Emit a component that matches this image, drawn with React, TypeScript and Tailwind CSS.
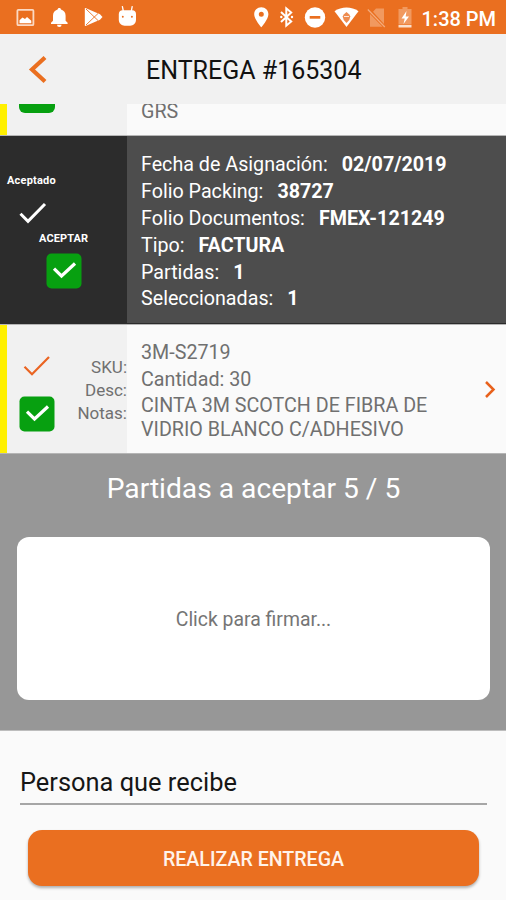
import type { ReactNode } from "react";

function StatusBar() {
  return (
    <div className="flex h-[34px] items-center bg-[#ea6f20] text-white">
      <div className="flex flex-1 pl-4">
        {/* picture */}
        <svg width="26" height="34" viewBox="16 0 26 34">
          <rect x="17.4" y="9.8" width="16" height="15.4" rx="1" fill="none" stroke="#fbd9c3" strokeWidth="1.8" />
          <path d="M19.500 23.200v-3l3-2.700 2.500 1.500 2-2 4.300 3.700v2.500z" fill="#fff" />
        </svg>
        {/* bell */}
        <svg width="36" height="34" viewBox="42 0 36 34">
          <path d="M59.300 8c-1.100 0-1.600.7-1.700 1.600-3 .8-4.600 3.300-4.600 6.100v5L51 22.800V24h16.600v-1.200l-2-2.100v-5c0-2.800-1.600-5.300-4.600-6.100-.1-.9-.6-1.600-1.700-1.600zM57 24.800a2.300 2.300 0 0 0 4.600 0z" fill="#fff" />
        </svg>
        {/* play store */}
        <svg width="34" height="34" viewBox="78 0 34 34">
          <path d="M85.500 8l14.500 6.200 2.500 2.800-2.500 2.800L85.500 26c-.5 0-.7-.3-.7-.8V8.800c0-.5.2-.8.7-.8z" fill="#fff" />
          <path d="M86 9l12 11.500M86 25l12-11.500" stroke="#ea6f20" strokeWidth="0.900" />
        </svg>
        {/* robot */}
        <svg width="28" height="34" viewBox="112 0 28 34">
          <path d="M122.300 6.200l1 4.800M132.300 6.200l-1 4.800" stroke="#fff" strokeWidth="1.300" />
          <path d="M122.500 10.300h9.800c2.200 0 3.700 1.500 3.700 3.700v5.500c0 4-2.800 6.200-5.800 6.200h-5.600c-3 0-5.800-2.200-5.800-6.200V14c0-2.200 1.500-3.700 3.700-3.700z" fill="#fff" />
          <circle cx="122.800" cy="16.700" r="0.950" fill="#ea6f20" />
          <circle cx="131.900" cy="16.700" r="0.950" fill="#ea6f20" />
        </svg>
      </div>
      {/* location */}
      <svg width="24" height="34" viewBox="250 0 24 34">
        <path fillRule="evenodd" d="M261.300 7.300c-4.100 0-7.100 3-7.100 6.900 0 5 7.100 13 7.100 13s7.100-8 7.100-13c0-3.900-3-6.900-7.100-6.900zm0 4.500a2.500 2.500 0 1 1 0 5 2.500 2.500 0 0 1 0-5z" fill="#fff" />
      </svg>
      {/* bluetooth */}
      <svg width="26" height="34" viewBox="274 0 26 34">
        <path d="M281 12l10.200 9.500-4.900 4.200V8.300l4.900 4.200L281 22" fill="none" stroke="#fff" strokeWidth="2" />
        <circle cx="281.300" cy="17" r="1.200" fill="#fff" />
        <circle cx="292" cy="17" r="1.200" fill="#fff" />
      </svg>
      {/* do not disturb */}
      <svg width="30" height="34" viewBox="300 0 30 34">
        <circle cx="315" cy="17.500" r="10.200" fill="#fff" />
        <rect x="309.700" y="16" width="10.600" height="2.700" fill="#ea6f20" />
      </svg>
      {/* wifi */}
      <svg width="34" height="34" viewBox="330 0 34 34">
        <path d="M334.500 11.200c7-4.800 17-4.800 24 0L346.500 27z" fill="#fff" />
        <path d="M346.500 12l2.800 2.500 1 2-1 3.500-2.800 3-2.800-3-1-3.500 1-2z" fill="#ee8c50" />
        <path d="M344 16.500h5" stroke="#fff" strokeWidth="0.800" />
      </svg>
      {/* sim */}
      <svg width="28" height="34" viewBox="364 0 28 34">
        <path d="M376 8.500h8V24l-11-12.300zM370 14v12.700h12.500z" fill="#f1995f" />
        <path d="M367.800 9.500l17 17.500" stroke="#f4ac7c" strokeWidth="1.200" />
      </svg>
      {/* battery */}
      <svg width="29" height="34" viewBox="392 0 29 34">
        <path d="M398.500 9h4V7h5v2h4v15.500h-13z" fill="#f1995f" />
        <path d="M398.500 25h13v2.500h-13z" fill="#fbe0cd" />
        <path d="M406.500 11l-5 7.500h3.200l-1.200 5.500 5.500-7.500h-3.300z" fill="#fff" />
      </svg>
      <span className="mt-[3px] w-[85px] pl-[0.5px] whitespace-nowrap text-[20px] leading-6 font-medium">1:38 PM</span>
    </div>
  );
}

function CheckBox() {
  return (
    <svg width="36" height="36" viewBox="0 0 36 36">
      <rect x="0.500" y="0.500" width="35" height="35" rx="5" fill="#07a010" />
      <path d="M8 15.700l7.500 7.300L29 10.500" fill="none" stroke="#fff" strokeWidth="3.200" />
    </svg>
  );
}

function Tick({ className, weight }: { className: string; weight: number }) {
  return (
    <svg width="28" height="22" viewBox="0 0 28 22" className={className}>
      <path d="M1.500 11.800l7.500 7.500L26 2" fill="none" stroke="currentColor" strokeWidth={weight} />
    </svg>
  );
}

function Detail({ label, children }: { label: string; children: ReactNode }) {
  return (
    <div className="flex gap-[14px] whitespace-nowrap">
      <span>{label}</span>
      <span className="font-bold">{children}</span>
    </div>
  );
}

export default function App() {
  return (
    <div className="flex h-[900px] w-[506px] flex-col overflow-hidden bg-[#fafafa] font-[Roboto,sans-serif]">
      <StatusBar />

      <header className="flex h-[70px] items-center bg-[#f1f1f1]">
        <svg width="146" height="70" viewBox="0 34 146 70">
          <path d="M45 57.500L32 69.500 45 81.500" fill="none" stroke="#ea6f20" strokeWidth="4.200" />
        </svg>
        <h1 className="mt-[4px] whitespace-nowrap text-[25px] leading-8 text-[#111]">ENTREGA #165304</h1>
      </header>

      <div className="flex h-[32px] border-b border-[#b5b5b5]">
        <div className="w-[7px] bg-[#fff000]" />
        <div className="w-[120px] bg-[#f1f1f1] pl-[12px]">
          <div className="h-[9px] w-[36px] rounded-b-[6px] bg-[#07a010]" />
        </div>
        <div className="overflow-hidden pl-[14px]">
          <div className="-mt-[4px] text-[19.7px] leading-6 text-[#707070]">GRS</div>
        </div>
      </div>

      <section className="flex h-[188px] border-b border-[#2b2b2b] bg-[#4d4d4d] text-white">
        <div className="flex w-[127px] flex-col bg-[#2c2c2c] pt-[38px]">
          <span className="pl-[7px] text-[11px] leading-[14px] font-bold tracking-[0.2px]">Aceptado</span>
          <Tick className="mt-[14px] ml-[19px]" weight={3} />
          <span className="mt-[8px] pl-[39px] text-[11px] leading-[14px] font-bold tracking-[0.1px]">ACEPTAR</span>
          <div className="mt-[7px] pl-[46px]"><CheckBox /></div>
        </div>
        <div className="pt-[16.4px] pl-[14px] text-[19.7px] leading-[26.8px]">
          <Detail label="Fecha de Asignación:">02/07/2019</Detail>
          <Detail label="Folio Packing:">38727</Detail>
          <Detail label="Folio Documentos:">FMEX-121249</Detail>
          <Detail label="Tipo:">FACTURA</Detail>
          <Detail label="Partidas:">1</Detail>
          <Detail label="Seleccionadas:">1</Detail>
        </div>
      </section>

      <section className="flex h-[130px] border-y border-[#b5b5b5] text-[#707070]">
        <div className="w-[7px] bg-[#fff000]" />
        <div className="flex w-[120px] justify-between bg-[#f1f1f1] pl-[12px]">
          <div className="pt-[30px]">
            <Tick className="ml-[4px] text-[#ea6422]" weight={2.200} />
            <div className="mt-[19px]"><CheckBox /></div>
          </div>
          <div className="pt-[31px] text-right text-[17px] leading-[23px]">
            <div>SKU:</div>
            <div>Desc:</div>
            <div>Notas:</div>
          </div>
        </div>
        <div className="flex-1 pt-[16.4px] pl-[14px] text-[19.7px] leading-[23.500px] whitespace-nowrap">
          <div className="mb-[3px]">3M-S2719</div>
          <div className="mb-[3px]">Cantidad: 30</div>
          <div>CINTA 3M SCOTCH DE FIBRA DE</div>
          <div>VIDRIO BLANCO C/ADHESIVO</div>
        </div>
        <svg width="26" height="128" viewBox="480 325 26 128">
          <path d="M486 382l7.500 7.500L486 397" fill="none" stroke="#e8611c" strokeWidth="2.500" />
        </svg>
      </section>

      <section className="flex h-[277px] flex-col items-center border-b border-[#bdbdbd] bg-[#979797] pt-[17px]">
        <div className="whitespace-nowrap pl-[1px] text-[28.2px] leading-9 text-white">Partidas a aceptar 5 / 5</div>
        <div className="mt-[30px] flex h-[163px] w-[473px] items-center justify-center rounded-[12px] bg-white text-[19.4px] text-[#757575]">
          <span className="mt-[3px] pl-[1px]">Click para firmar...</span>
        </div>
      </section>

      <section className="flex flex-1 flex-col px-[20px] pt-[34px]">
        <div className="h-[40px] w-[467px] border-b-2 border-[#a6a6a6] text-[25.4px] leading-[35px] text-[#161616]">Persona que recibe</div>
        <button className="mt-[25px] ml-[8px] flex h-[56px] w-[451px] items-center justify-center rounded-[14px] bg-[#ea6f20] text-[19.6px] font-medium text-[#fff3ea] shadow-[0_2px_3px_rgba(0,0,0,0.3)]">
          <span className="mt-[4px]">REALIZAR ENTREGA</span>
        </button>
      </section>
    </div>
  );
}
